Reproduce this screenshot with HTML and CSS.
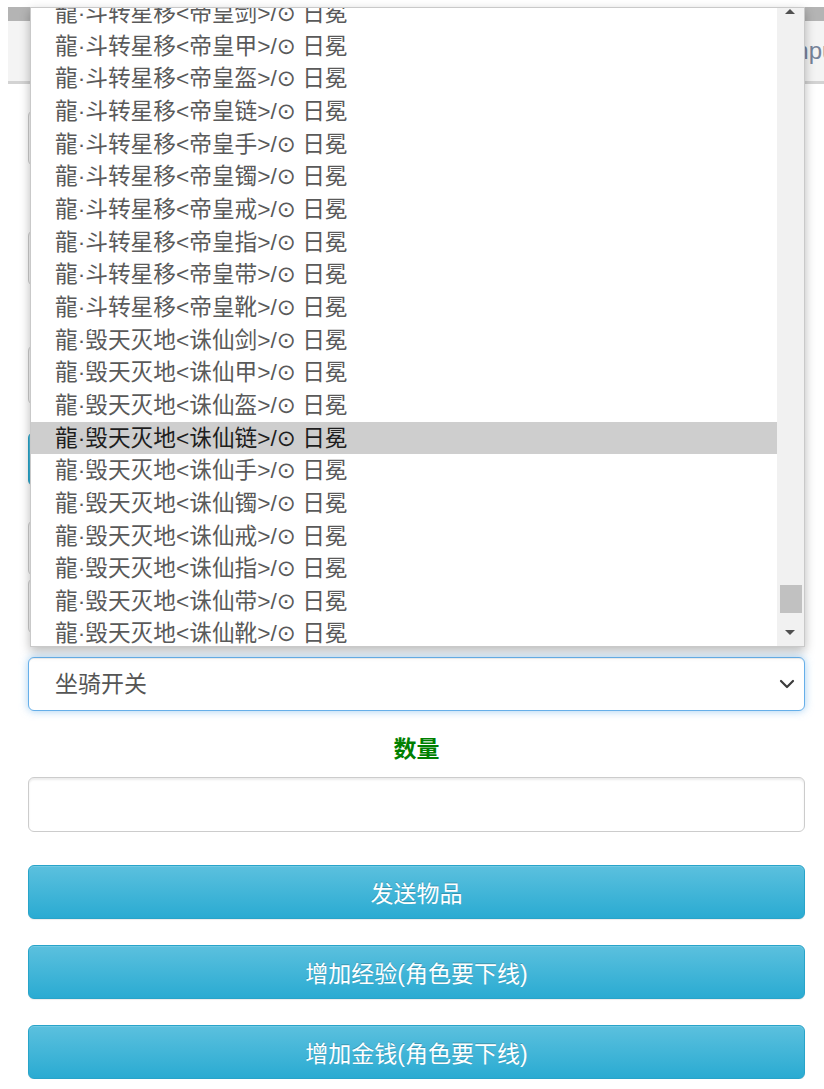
FILE: index.html
```html
<!DOCTYPE html>
<html lang="zh-CN">
<head>
    <meta charset="UTF-8">
    <meta name="viewport" content="width=device-width, initial-scale=1.0">
    <title>GM工具</title>
    <link rel="stylesheet" href="styles.css">
</head>
<body>
    <div class="header">
        <div class="header-bar"></div>
        <div class="header-body">
            <span class="header-title">Input</span>
        </div>
    </div>
    <div class="container">
        <form class="gm-form">
            <input class="form-control gap-first" type="text">
            <input class="form-control gap-label" type="text">
            <input class="form-control tall gap-label-sm" type="text">
            <button class="btn btn-info gap-btn" type="button"></button>
            <input class="form-control gap-md" type="text">
            <input class="form-control gap-xs" type="text">
            <div class="select-wrap gap-select">
                <select class="form-control select-focus">
                    <option>坐骑开关</option>
                </select>
                <svg class="select-arrow" width="16" height="10" viewBox="0 0 16 10">
                    <path d="M2 2 L8 8 L14 2" fill="none" stroke="#3c3c3c" stroke-width="2.2" stroke-linecap="round" stroke-linejoin="round"/>
                </svg>
            </div>
            <label class="form-label">数量</label>
            <input class="form-control amount" type="text">
            <button class="btn btn-info gap-send" type="button">发送物品</button>
            <button class="btn btn-info gap-btn-sm" type="button">增加经验(角色要下线)</button>
            <button class="btn btn-info gap-btn-sm" type="button">增加金钱(角色要下线)</button>
        </form>
    </div>

    <!-- open option list of the item select -->
    <div class="select-popup">
        <div class="options">
            <div class="option">龍·斗转星移&lt;帝皇剑&gt;/⊙ 日冕</div>
            <div class="option">龍·斗转星移&lt;帝皇甲&gt;/⊙ 日冕</div>
            <div class="option">龍·斗转星移&lt;帝皇盔&gt;/⊙ 日冕</div>
            <div class="option">龍·斗转星移&lt;帝皇链&gt;/⊙ 日冕</div>
            <div class="option">龍·斗转星移&lt;帝皇手&gt;/⊙ 日冕</div>
            <div class="option">龍·斗转星移&lt;帝皇镯&gt;/⊙ 日冕</div>
            <div class="option">龍·斗转星移&lt;帝皇戒&gt;/⊙ 日冕</div>
            <div class="option">龍·斗转星移&lt;帝皇指&gt;/⊙ 日冕</div>
            <div class="option">龍·斗转星移&lt;帝皇带&gt;/⊙ 日冕</div>
            <div class="option">龍·斗转星移&lt;帝皇靴&gt;/⊙ 日冕</div>
            <div class="option">龍·毁天灭地&lt;诛仙剑&gt;/⊙ 日冕</div>
            <div class="option">龍·毁天灭地&lt;诛仙甲&gt;/⊙ 日冕</div>
            <div class="option">龍·毁天灭地&lt;诛仙盔&gt;/⊙ 日冕</div>
            <div class="option active">龍·毁天灭地&lt;诛仙链&gt;/⊙ 日冕</div>
            <div class="option">龍·毁天灭地&lt;诛仙手&gt;/⊙ 日冕</div>
            <div class="option">龍·毁天灭地&lt;诛仙镯&gt;/⊙ 日冕</div>
            <div class="option">龍·毁天灭地&lt;诛仙戒&gt;/⊙ 日冕</div>
            <div class="option">龍·毁天灭地&lt;诛仙指&gt;/⊙ 日冕</div>
            <div class="option">龍·毁天灭地&lt;诛仙带&gt;/⊙ 日冕</div>
            <div class="option">龍·毁天灭地&lt;诛仙靴&gt;/⊙ 日冕</div>
        </div>
        <div class="scrollbar">
            <span class="arrow-up"></span>
            <span class="thumb"></span>
            <span class="arrow-down"></span>
        </div>
    </div>
</body>
</html>
```

FILE: styles.css
```css
/* Common styles */
body {
    margin: 0;
    padding: 0;
    font-family: "Liberation Sans", "DejaVu Sans", "Noto Sans CJK SC", sans-serif;
    background-color: #ffffff;
    color: #555555;
    overflow: hidden;
}
.header {
    margin: 7px 0 0 8px;
}
.header-bar {
    height: 14px;
    background-color: #b4b4b4;
}
.header-body {
    height: 60px;
    background-color: #f4f4f4;
    border-bottom: 3px solid #d3d3d3;
    display: flex;
    justify-content: flex-end;
    align-items: center;
    overflow: hidden;
}
.header-title {
    font-size: 24px;
    color: #76839a;
    margin-right: -18px;
}
.container {
    padding: 0 19px 0 28px;
}
.gm-form {
    display: flex;
    flex-direction: column;
}
.form-control {
    display: block;
    box-sizing: border-box;
    width: 100%;
    height: 56px;
    margin: 0;
    padding: 0 26px;
    font-family: inherit;
    font-size: 23px;
    color: #555555;
    background-color: #ffffff;
    border: 1px solid #cccccc;
    border-radius: 6px;
    box-shadow: inset 0 2px 2px rgba(0, 0, 0, 0.075);
}
.form-control.tall {
    height: 60px;
}
.gap-first { margin-top: 26px; }
.gap-label { margin-top: 64px; }
.gap-label-sm { margin-top: 59px; }
.gap-btn { margin-top: 27px; }
.gap-md { margin-top: 34px; }
.gap-xs { margin-top: 2px; }
.gap-select { margin-top: 23px; }
.gap-send { margin-top: 33px; }
.gap-btn-sm { margin-top: 26px; }

.select-wrap {
    position: relative;
}
.select-focus {
    height: 54px;
    appearance: none;
    border-color: #66afe9;
    box-shadow: inset 0 1px 1px rgba(0, 0, 0, 0.075), 0 0 8px rgba(102, 175, 233, 0.6);
    outline: none;
}
.select-arrow {
    position: absolute;
    right: 10px;
    top: 22px;
}
.form-label {
    display: block;
    box-sizing: border-box;
    height: 66px;
    padding-top: 11px;
    line-height: 55px;
    text-align: center;
    font-size: 23px;
    font-weight: bold;
    color: #008000;
}
.amount {
    height: 55px;
}
.btn {
    display: block;
    box-sizing: border-box;
    width: 100%;
    height: 54px;
    margin-bottom: 0;
    padding: 0;
    font-family: inherit;
    font-size: 23px;
    color: #ffffff;
    text-shadow: 0 -1px 0 rgba(0, 0, 0, 0.2);
    border: 1px solid #28a4c9;
    border-radius: 6px;
    cursor: pointer;
}
.btn-info {
    background-image: linear-gradient(to bottom, #5bc0de 0, #2aabd2 100%);
    box-shadow: inset 0 1px 0 rgba(255, 255, 255, 0.15), 0 1px 1px rgba(0, 0, 0, 0.075);
}

/* open dropdown list */
.select-popup {
    position: absolute;
    top: 7px;
    left: 30px;
    width: 775px;
    height: 640px;
    box-sizing: border-box;
    background-color: #ffffff;
    border: 1px solid #c9c9c9;
    box-shadow: 0 4px 10px rgba(0, 0, 0, 0.28);
    overflow: hidden;
    display: flex;
}
.options {
    flex: 1;
    margin-top: -11px;
}
.option {
    height: 32.67px;
    line-height: 32.67px;
    padding-left: 24px;
    font-size: 22.7px;
    color: #5a5a5a;
    white-space: nowrap;
}
.option.active {
    background-color: #cecece;
    color: #1e1e1e;
}
.scrollbar {
    position: relative;
    width: 27px;
    background-color: #f1f1f1;
}
.arrow-up,
.arrow-down {
    position: absolute;
    left: 8px;
    width: 0;
    height: 0;
    border-left: 5px solid transparent;
    border-right: 5px solid transparent;
}
.arrow-up {
    top: 1px;
    border-bottom: 5px solid #505050;
}
.arrow-down {
    bottom: 11px;
    border-top: 5px solid #505050;
}
.thumb {
    position: absolute;
    left: 3px;
    right: 2px;
    top: 577px;
    height: 28px;
    background-color: #c1c1c1;
}
```
